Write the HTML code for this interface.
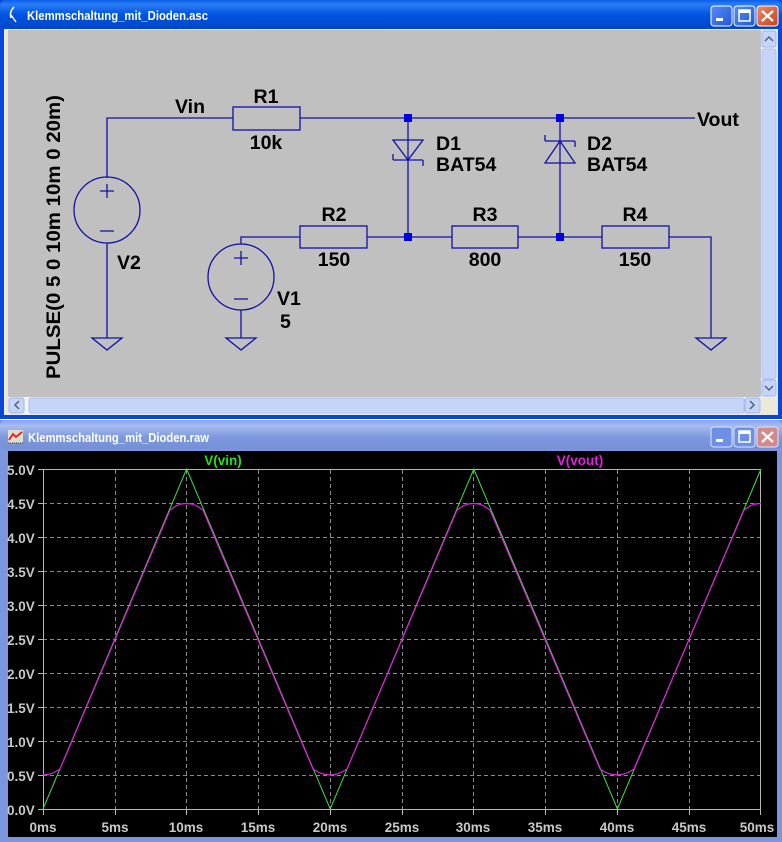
<!DOCTYPE html>
<html><head><meta charset="utf-8"><style>
html,body{margin:0;padding:0;background:#fff;width:782px;height:842px;overflow:hidden}
svg{display:block;position:absolute;left:0;top:0}
.l{font-family:"Liberation Sans",Arial,sans-serif;font-weight:bold;font-size:19.5px;fill:#000}
.c{text-anchor:middle}
.t{font-family:"Liberation Sans",Arial,sans-serif;font-weight:bold;font-size:13px;fill:#fff}
.ax{font-family:"Liberation Sans",Arial,sans-serif;font-weight:bold;font-size:13.5px;fill:#c8c8c8}
</style></head><body>
<svg width="782" height="842" viewBox="0 0 782 842" xmlns="http://www.w3.org/2000/svg">
<defs>
<linearGradient id="tb" x1="0" y1="0" x2="0" y2="1">
<stop offset="0" stop-color="#0a5fe8"/><stop offset="0.15" stop-color="#2a7ef5"/><stop offset="0.5" stop-color="#0054e3"/><stop offset="1" stop-color="#0045c8"/></linearGradient>
<linearGradient id="tb2" x1="0" y1="0" x2="0" y2="1">
<stop offset="0" stop-color="#8aa6e8"/><stop offset="0.2" stop-color="#a6bbef"/><stop offset="0.6" stop-color="#7d98de"/><stop offset="1" stop-color="#7590d8"/></linearGradient>
<linearGradient id="btn" x1="0" y1="0" x2="1" y2="1"><stop offset="0" stop-color="#5a8cf6"/><stop offset="1" stop-color="#1f56d8"/></linearGradient>
<linearGradient id="cls" x1="0" y1="0" x2="1" y2="1"><stop offset="0" stop-color="#ec8a6a"/><stop offset="1" stop-color="#c8401a"/></linearGradient>
</defs>
<rect x="0" y="0" width="782" height="419" fill="#0848d8"/>
<rect x="0" y="0" width="782" height="29" fill="url(#tb)" rx="6"/>
<rect x="4" y="29" width="774" height="386" fill="#ece9d8"/>
<text x="27" y="20" class="t" textLength="181" lengthAdjust="spacingAndGlyphs">Klemmschaltung_mit_Dioden.asc</text>
<path d="M14 7 Q9 12 11 18 M11 15 L16 22" stroke="#fff" stroke-width="1.5" fill="none"/>
<g>
<rect x="711" y="6" width="21" height="20" rx="3" fill="url(#btn)" stroke="#fff"/>
<rect x="716" y="18" width="7" height="3" fill="#fff"/>
<rect x="734" y="6" width="21" height="20" rx="3" fill="url(#btn)" stroke="#fff"/>
<rect x="739" y="10" width="11" height="11" fill="none" stroke="#fff" stroke-width="1.5"/><rect x="739" y="10" width="11" height="3" fill="#fff"/>
<rect x="757" y="6" width="21" height="20" rx="3" fill="url(#cls)" stroke="#fff"/>
<path d="M762 11 L773 21 M773 11 L762 21" stroke="#fff" stroke-width="2.2"/>
</g>
<rect x="8" y="30" width="753" height="367" fill="#c0c0c0"/>
<rect x="761" y="30" width="16" height="367" fill="#f4f3ee"/>
<rect x="762" y="31" width="14" height="16" rx="2" fill="#c6d4f7" stroke="#9db4ee"/>
<path d="M765 41 L769 37 L773 41" stroke="#4d6185" stroke-width="1.5" fill="none"/>
<rect x="762" y="49" width="14" height="330" rx="2" fill="#c6d4f7" stroke="#aabff3"/>
<rect x="762" y="380" width="14" height="16" rx="2" fill="#c6d4f7" stroke="#9db4ee"/>
<path d="M765 386 L769 390 L773 386" stroke="#4d6185" stroke-width="1.5" fill="none"/>
<rect x="8" y="397" width="753" height="17" fill="#f4f3ee"/>
<rect x="9" y="398" width="15" height="15" rx="2" fill="#c6d4f7" stroke="#9db4ee"/>
<path d="M19 401 L15 405 L19 409" stroke="#4d6185" stroke-width="1.5" fill="none"/>
<rect x="29" y="398" width="715" height="15" rx="2" fill="#c6d4f7" stroke="#aabff3"/>
<rect x="745" y="398" width="15" height="15" rx="2" fill="#c6d4f7" stroke="#9db4ee"/>
<path d="M750 401 L754 405 L750 409" stroke="#4d6185" stroke-width="1.5" fill="none"/>
<g stroke="#1010a8" stroke-width="1.3" fill="none">
<path d="M107 178 V118 H233 M300 118 H695"/>
<rect x="233" y="107" width="67" height="23"/>
<circle cx="107" cy="210" r="33"/>
<path d="M100 191 H114 M107 184 V198 M100 231 H114"/>
<path d="M107 243 V338 M92 338 H122 L107 350 Z"/>
<path d="M408 118 V237"/>
<path d="M393 140 H423 L408 160 Z M393 160 H423 M393 160 V154 M423 160 V166"/>
<path d="M560 118 V237"/>
<path d="M545 163 H575 L560 141 Z M545 141 H575 M545 141 V135 M575 141 V147"/>
<path d="M241 244 V237 H300 M367 237 H452 M518 237 H602 M669 237 H711 V338 M696 338 H726 L711 350 Z"/>
<rect x="300" y="226" width="67" height="22"/>
<rect x="452" y="226" width="66" height="22"/>
<rect x="602" y="226" width="67" height="22"/>
<circle cx="241" cy="277" r="33"/>
<path d="M234 258 H248 M241 251 V265 M234 299 H248"/>
<path d="M241 310 V338 M226 338 H256 L241 350 Z"/>
</g>
<g fill="#0000e0">
<rect x="404" y="114" width="8" height="8"/><rect x="556" y="114" width="8" height="8"/>
<rect x="404" y="233" width="8" height="8"/><rect x="556" y="233" width="8" height="8"/>
</g>
<text x="175" y="113" class="l">Vin</text>
<text x="266" y="103" class="l c">R1</text>
<text x="266" y="149" class="l c">10k</text>
<text x="697" y="126" class="l">Vout</text>
<text x="436" y="150" class="l">D1</text><text x="436" y="171" class="l">BAT54</text>
<text x="587" y="150" class="l">D2</text><text x="587" y="171" class="l">BAT54</text>
<text x="334" y="221" class="l c">R2</text><text x="334" y="266" class="l c">150</text>
<text x="485" y="221" class="l c">R3</text><text x="485" y="266" class="l c">800</text>
<text x="635" y="221" class="l c">R4</text><text x="635" y="266" class="l c">150</text>
<text x="117" y="269" class="l">V2</text>
<text x="277" y="305" class="l">V1</text><text x="280" y="328" class="l">5</text>
<text class="l" transform="translate(60,379) rotate(-90)" textLength="284" lengthAdjust="spacingAndGlyphs">PULSE(0 5 0 10m 10m 0 20m)</text>
<rect x="0" y="420" width="782" height="422" fill="#7b96dc"/>
<rect x="0" y="420" width="782" height="29" fill="url(#tb2)" rx="6"/>
<text x="28" y="442" class="t" fill="#e8eefc" textLength="181" lengthAdjust="spacingAndGlyphs">Klemmschaltung_mit_Dioden.raw</text>
<rect x="8" y="430" width="15" height="13" fill="#e0dcd0"/>
<path d="M9 440 L13 434 L16 437 L22 432" stroke="#e02020" stroke-width="1.8" fill="none"/>
<path d="M8 443 H23" stroke="#333" stroke-dasharray="1 1"/>
<g>
<rect x="711" y="427" width="21" height="20" rx="3" fill="#6e8fe6" stroke="#dde6fb"/>
<rect x="716" y="439" width="7" height="3" fill="#fff"/>
<rect x="734" y="427" width="21" height="20" rx="3" fill="#6e8fe6" stroke="#dde6fb"/>
<rect x="739" y="431" width="11" height="11" fill="none" stroke="#fff" stroke-width="1.5"/><rect x="739" y="431" width="11" height="3" fill="#fff"/>
<rect x="757" y="427" width="21" height="20" rx="3" fill="#d48a8a" stroke="#dde6fb"/>
<path d="M762 432 L773 442 M773 432 L762 442" stroke="#fff" stroke-width="2.2"/>
</g>
<rect x="8" y="451" width="769" height="386" fill="#000"/>
<g stroke="#8a8a8a" stroke-width="1" stroke-dasharray="4 3">
<path d="M43 503.5H761M43 537.5H761M43 571.5H761M43 605.5H761M43 639.5H761M43 673.5H761M43 707.5H761M43 741.5H761M43 775.5H761"/>
<path d="M115.5 470V809M186.5 470V809M258.5 470V809M330.5 470V809M402.5 470V809M473.5 470V809M545.5 470V809M617.5 470V809M689.5 470V809"/>
</g>
<rect x="43.5" y="469.5" width="717" height="340" fill="none" stroke="#b8b8b8"/>
<g stroke="#b8b8b8">
<path d="M38 469.5H43M38 503.5H43M38 537.5H43M38 571.5H43M38 605.5H43M38 639.5H43M38 673.5H43M38 707.5H43M38 741.5H43M38 775.5H43M38 809.5H43"/>
<path d="M43.5 809V815M115.5 809V815M186.5 809V815M258.5 809V815M330.5 809V815M402.5 809V815M473.5 809V815M545.5 809V815M617.5 809V815M689.5 809V815M760.5 809V815"/>
</g>
<g class="ax">
<text x="7" y="475">5.0V</text><text x="7" y="509">4.5V</text><text x="7" y="543">4.0V</text><text x="7" y="577">3.5V</text><text x="7" y="611">3.0V</text><text x="7" y="645">2.5V</text><text x="7" y="679">2.0V</text><text x="7" y="713">1.5V</text><text x="7" y="747">1.0V</text><text x="7" y="781">0.5V</text><text x="7" y="815">0.0V</text>
</g>
<g class="ax" text-anchor="middle">
<text x="43" y="832">0ms</text><text x="115" y="832">5ms</text><text x="186" y="832">10ms</text><text x="258" y="832">15ms</text><text x="330" y="832">20ms</text><text x="402" y="832">25ms</text><text x="473" y="832">30ms</text><text x="545" y="832">35ms</text><text x="617" y="832">40ms</text><text x="689" y="832">45ms</text><text x="757" y="832">50ms</text>
</g>
<text x="223" y="465" text-anchor="middle" font-family="Liberation Sans,sans-serif" font-weight="bold" font-size="13.5" fill="#20e020">V(vin)</text>
<text x="580" y="465" text-anchor="middle" font-family="Liberation Sans,sans-serif" font-weight="bold" font-size="13.5" fill="#e020e0">V(vout)</text>
<polyline fill="none" stroke="#40e040" stroke-width="1" points="43,809 186.6,469 330.2,809 473.8,469 617.4,809 761,469"/>
<polyline fill="none" stroke="#e020e0" stroke-width="1.2" points="43,775 50,774 55,772 60,769 170,510 176,506 181,504 186.6,503.5 192,504 197,506 203,510 313,769 318,772 323,774 330.2,775 337,774 342,772 347,769 457,510 463,506 468,504 473.8,503.5 479,504 484,506 490,510 600,769 605,772 610,774 617.4,775 624,774 629,772 634,769 744,510 750,506 755,504 761,503.5"/>
</svg>
</body></html>
